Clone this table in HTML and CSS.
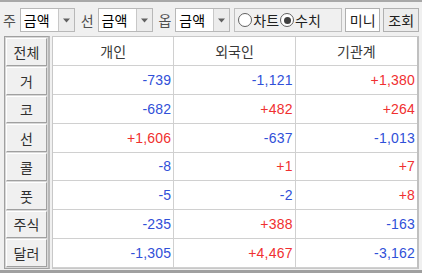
FILE: index.html
```html
<!DOCTYPE html>
<html lang="ko">
<head>
<meta charset="utf-8">
<link rel="stylesheet" href="styles.css">
</head>
<body>
<div class="app">
  <div class="toolbar">
    <span class="lbl">주</span>
    <div class="combo"><span class="val">금액</span><span class="drop"><svg width="9" height="5" viewBox="0 0 9 5"><path d="M1 0.5h7L4.5 4.5z" fill="#606060"/></svg></span></div>
    <span class="lbl">선</span>
    <div class="combo"><span class="val">금액</span><span class="drop"><svg width="9" height="5" viewBox="0 0 9 5"><path d="M1 0.5h7L4.5 4.5z" fill="#606060"/></svg></span></div>
    <span class="lbl">옵</span>
    <div class="combo"><span class="val">금액</span><span class="drop"><svg width="9" height="5" viewBox="0 0 9 5"><path d="M1 0.5h7L4.5 4.5z" fill="#606060"/></svg></span></div>
    <div class="radios">
      <span class="radio"><span class="dot"></span>차트</span>
      <span class="radio on"><span class="dot"></span>수치</span>
    </div>
    <button class="btn white">미니</button>
    <button class="btn">조회</button>
  </div>
  <div class="main">
    <div class="side">
      <div class="sb">전체</div>
      <div class="sb">거</div>
      <div class="sb">코</div>
      <div class="sb">선</div>
      <div class="sb">콜</div>
      <div class="sb">풋</div>
      <div class="sb">주식</div>
      <div class="sb">달러</div>
    </div>
    <div class="grid">
      <div class="hd">개인</div><div class="hd">외국인</div><div class="hd">기관계</div>
      <div class="c b">-739</div><div class="c b">-1,121</div><div class="c r">+1,380</div>
      <div class="c b">-682</div><div class="c r">+482</div><div class="c r">+264</div>
      <div class="c r">+1,606</div><div class="c b">-637</div><div class="c b">-1,013</div>
      <div class="c b">-8</div><div class="c r">+1</div><div class="c r">+7</div>
      <div class="c b">-5</div><div class="c b">-2</div><div class="c r">+8</div>
      <div class="c b">-235</div><div class="c r">+388</div><div class="c b">-163</div>
      <div class="c b">-1,305</div><div class="c r">+4,467</div><div class="c b">-3,162</div>
    </div>
  </div>
</div>
</body>
</html>
```
FILE: styles.css
```css
* { box-sizing: border-box; }
html, body { margin: 0; padding: 0; }
body {
  width: 422px;
  height: 273px;
  overflow: hidden;
  background: #f0f0f0;
  font-family: "Noto Sans CJK KR", "Noto Sans", sans-serif;
  font-size: 14px;
  color: #202020;
}
.app {
  height: 273px;
  border-top: 2px solid #a8a8a8;
  border-bottom: 3px solid #a0a0a0;
  display: flex;
  flex-direction: column;
}
.toolbar {
  display: flex;
  align-items: center;
  height: 24px;
  margin: 6px 0 4px 3px;
}
.lbl {
  width: 17px;
  color: #505050;
  line-height: 24px;
}
.combo {
  display: flex;
  height: 24px;
  border: 1px solid #b8b8b8;
  background: #fff;
  margin-right: 6px;
}
.combo .val {
  width: 37px;
  padding-left: 3px;
  line-height: 22px;
  color: #000;
}
.combo .drop {
  width: 16px;
  background: #ececec;
  border-left: 1px solid #c8c8c8;
  display: flex;
  align-items: center;
  justify-content: center;
}
.radios {
  display: flex;
  align-items: center;
  gap: 1px;
  height: 24px;
  border: 1px solid #c0c0c0;
  padding: 0 2px 0 3px;
  margin-left: -2px;
  margin-right: 3px;
  width: 109px;
}
.radio {
  display: flex;
  align-items: center;
  gap: 1px;
  color: #202020;
}
.dot {
  width: 14px;
  height: 14px;
  border-radius: 50%;
  border: 1px solid #606060;
  background: #fff;
  position: relative;
}
.radio.on .dot::after {
  content: "";
  position: absolute;
  left: 2.5px; top: 2.5px;
  width: 7px; height: 7px;
  border-radius: 50%;
  background: #404040;
}
.btn {
  font: inherit;
  height: 24px;
  padding: 0;
  width: 36px;
  margin-right: 3px;
  border: 1px solid #b0b0b0;
  background: #ececec;
  color: #202020;
}
.btn.white { background: #fff; }
.main {
  display: flex;
  margin: 0 3px 1px 4px;
  flex: 1;
}
.side {
  width: 46px;
  border: 1px solid #a0a0a0;
  border-right: 2px solid #b8b8b8;
  background: #d8d8d8;
  display: grid;
  grid-template-rows: repeat(8, 1fr);
  gap: 1px;
  padding: 1px;
}
.sb {
  background: #f0f0f0;
  border: 1px solid #fff;
  border-right-color: #a0a0a0;
  border-bottom-color: #a0a0a0;
  display: flex;
  align-items: center;
  justify-content: center;
  color: #303030;
}
.grid {
  flex: 1;
  margin-left: 2px;
  display: grid;
  grid-template-columns: 1fr 1fr 1fr;
  grid-template-rows: repeat(8, 1fr);
  background: #fff;
  border: 1px solid #c8c8c8;
  border-right: 2px solid #c0c0c0;
}
.hd, .c {
  border-right: 1px solid #d0d0d0;
  border-bottom: 1px solid #d0d0d0;
  display: flex;
  align-items: center;
}
.hd:nth-child(3n), .c:nth-child(3n) { border-right: none; }
.hd { justify-content: center; color: #383838; }
.c {
  justify-content: flex-end;
  padding-right: 2px;
  font-family: "Liberation Sans", "DejaVu Sans", sans-serif;
  font-size: 14px;
  letter-spacing: 0.2px;
}
.c.b { color: #3050d8; }
.c.r { color: #f03030; }
```
